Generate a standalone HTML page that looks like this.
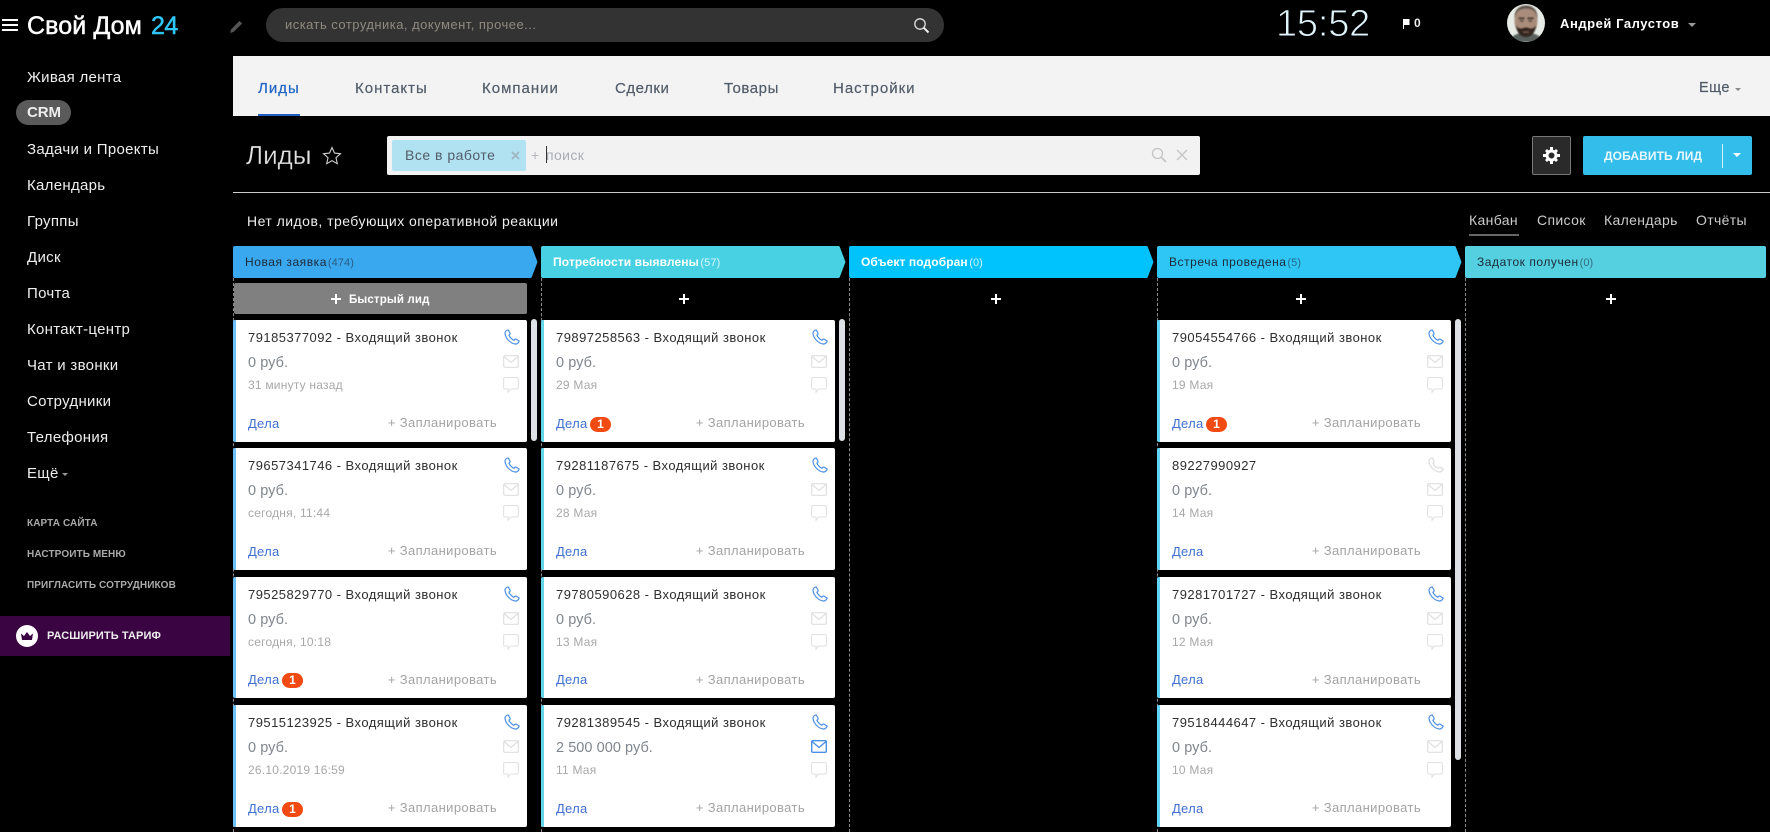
<!DOCTYPE html>
<html lang="ru">
<head>
<meta charset="utf-8">
<title>Лиды</title>
<style>
html,body{margin:0;padding:0;background:#000;width:1770px;height:832px;overflow:hidden}
body{position:relative;font-family:"Liberation Sans","DejaVu Sans",sans-serif;color:#fff}
.a{position:absolute;white-space:nowrap}
.nav{position:absolute;left:27px;font-size:15px;line-height:20px;color:#eee;letter-spacing:.3px;white-space:nowrap}
.sm{position:absolute;left:27px;font-size:10px;font-weight:bold;line-height:14px;color:#aaa;white-space:nowrap;letter-spacing:.1px}
.tab{position:absolute;top:79px;font-size:15px;line-height:20px;color:#525c69;letter-spacing:.55px;white-space:nowrap;-webkit-text-stroke:.2px currentColor}
.tab.x{letter-spacing:1px}
.vt{position:absolute;top:210px;font-size:14px;line-height:20px;color:#ccc;letter-spacing:.35px;white-space:nowrap}
.h{position:absolute;top:246px;height:32px;line-height:32px;font-size:12px;letter-spacing:.55px;white-space:nowrap;color:#1d2a38}
.h i{font-style:normal;font-size:11px;opacity:.6;letter-spacing:.1px;margin-left:-3px}
.h.w{color:#fff;font-weight:bold;letter-spacing:.1px}
.h.w i{font-weight:normal;opacity:.8;margin-left:-2px}
.c{position:absolute;width:291px;height:121.5px;background:#fff;border-left:3px solid #6cc0f5;border-radius:2px}
.c2{border-left-color:#65d6e8}
.c4{border-left-color:#63d3f9}
.c div,.c svg{position:absolute}
.t{left:12px;top:9px;line-height:18px;font-size:13px;color:#2e2e2e;letter-spacing:.46px;white-space:nowrap}
.v{left:12px;top:34px;line-height:18px;font-size:14.5px;color:#7f868e;letter-spacing:.05px;white-space:nowrap}
.d{left:12px;top:56px;line-height:18px;font-size:12px;color:#a8a8a8;letter-spacing:.22px;white-space:nowrap}
.l{left:12px;top:94.5px;line-height:18px;font-size:13px;color:#3f6fd0;letter-spacing:.25px}
.p{right:30px;top:94px;line-height:18px;font-size:13px;color:#a3a3a3;letter-spacing:.38px;white-space:nowrap}
.b{left:46px;top:96.5px;width:21px;height:15px;line-height:15px;border-radius:7.5px;background:#f24a13;color:#fff;text-align:center;font-size:12px;font-weight:bold}
.ip{left:268px;top:9px;width:16px;height:16px;fill:none;stroke:#4c90e6;stroke-width:1.2}
.ip.g{stroke:#dcdcdc}
.im{left:267px;top:35px;width:16px;height:13px;fill:none;stroke:#dfdfdf;stroke-width:1.2}
.im.on{stroke:#4c90e6;stroke-width:1.4}
.ic{left:267px;top:57px;width:16px;height:16px;fill:none;stroke:#e2e2e2;stroke-width:1.1}
.sb{position:absolute;width:6px;background:#dde1e5;border-radius:3px}
.ds{position:absolute;width:0;border-left:1px dashed #8a8a8a}
.pl{position:absolute;top:294px;width:10px;height:10px}
.pl:before,.pl:after{content:"";position:absolute;background:#fff}
.pl:before{left:4px;top:0;width:2px;height:10px}
.pl:after{left:0;top:4px;width:10px;height:2px}
</style>
</head>
<body>
<svg width="0" height="0" style="position:absolute">
<defs>
<symbol id="ph" viewBox="0 0 16 16"><path d="M3.6 1C2 1.7.8 3 1 4.6c.6 4.8 5.4 9.8 10.2 10.4 1.7.2 3-1 3.8-2.3.2-.4.1-.8-.3-1l-2.6-1.6c-.4-.2-.8-.2-1.1.1l-1.1 1.1C8 10.500 5.700 8.100 4.900 6.300l1-1.100c.3-.3.3-.7.1-1.100L4.500 1.300C4.300 1 3.900.9 3.600 1z"/></symbol>
<symbol id="ml" viewBox="0 0 16 13"><rect x=".7" y=".7" width="14.600" height="11.600" rx="1"/><path d="M1 1.500l7 6 7-6"/></symbol>
<symbol id="ch" viewBox="0 0 16 16"><path d="M2 .6h12c.8 0 1.400.6 1.400 1.400v8.600c0 .8-.6 1.400-1.400 1.400H7.500L5 15.300V12H2c-.8 0-1.400-.6-1.400-1.400V2C.6 1.200 1.200.6 2 .6z"/></symbol>
</defs>
</svg>

<!-- top bar -->
<div class="a" style="left:2px;top:19px;width:16px;height:2px;background:#fff"></div>
<div class="a" style="left:2px;top:24px;width:16px;height:2px;background:#fff"></div>
<div class="a" style="left:2px;top:29px;width:16px;height:2px;background:#fff"></div>
<div class="a" style="left:27px;top:10px;font-size:25px;line-height:32px;color:#fff;-webkit-text-stroke:.5px #fff;letter-spacing:.1px">Свой Дом <span style="color:#2fc6f6;-webkit-text-stroke:.5px #2fc6f6;margin-left:2px;letter-spacing:-.6px">24</span></div>
<svg class="a" style="left:229px;top:19px" width="16" height="15" viewBox="0 0 16 15"><path d="M1 14l1.200-3.800 8.300-8.300 2.600 2.600-8.300 8.300z" fill="#555"/></svg>
<div class="a" style="left:266px;top:8px;width:678px;height:34px;border-radius:17px;background:#333"></div>
<div class="a" style="left:285px;top:15px;font-size:13px;line-height:20px;color:#8f8a80;letter-spacing:.47px">искать сотрудника, документ, прочее...</div>
<svg class="a" style="left:913px;top:17px" width="17" height="17" viewBox="0 0 17 17"><circle cx="7" cy="7" r="5.200" fill="none" stroke="#ddd" stroke-width="1.300"/><path d="M10.700 10.700l4.800 4.800" stroke="#eee" stroke-width="2"/></svg>
<div class="a" style="left:1276px;top:2px;font-size:38px;line-height:44px;color:#dff4fb;letter-spacing:-.2px;-webkit-text-stroke:.9px #000">15:52</div>
<svg class="a" style="left:1402px;top:19px" width="8" height="10" viewBox="0 0 8 10"><path d="M1 0h6.500v6H2v4H1z" fill="#fff"/></svg>
<div class="a" style="left:1414px;top:14px;font-size:12px;line-height:18px;font-weight:bold;color:#eee">0</div>
<svg class="a" style="left:1507px;top:4px" width="38" height="38" viewBox="0 0 38 38">
<defs><clipPath id="av"><circle cx="19" cy="19" r="19"/></clipPath></defs>
<g clip-path="url(#av)">
<rect width="38" height="38" fill="#e8ece6"/>
<g style="filter:blur(.7px)">
<path d="M3 38c1-7 7-9 16-9s15 2 16 9z" fill="#59615f"/>
<ellipse cx="19" cy="17" rx="11.500" ry="15" fill="#a98c7a"/>
<path d="M7.500 15C7 6 12 1.500 19 1.500S31 6 30.500 15c-1-5-2.500-7-4-8.500C24 5 21.500 4.500 19 4.500s-5 .5-7.500 2c-1.500 1.500-3 3.500-4 8.500z" fill="#5f544c"/>
<path d="M11.500 13.500h6v1.600h-6zM20.500 13.500h6v1.600h-6z" fill="#3f322c"/>
<path d="M13 16.500h3.500v1h-3.500zM21.500 16.500h3.500v1h-3.500z" fill="#2f2521"/>
<path d="M9 21c.5 8 5 12 10 12s9.500-4 10-12c-1 2.500-2.500 3.500-5 3.500-2 0-3-1-5-1s-3 1-5 1c-2.500 0-4-1-5-3.500z" fill="#33261f"/>
<path d="M16 27.500h6v1.200h-6z" fill="#8a6a5c"/>
</g>
</g>
</svg>
<div class="a" style="left:1560px;top:15px;font-size:13px;line-height:18px;font-weight:bold;color:#fff;letter-spacing:.55px">Андрей Галустов</div>
<div class="a" style="left:1688px;top:23px;width:0;height:0;border:4px solid transparent;border-top-color:#999;border-bottom:0"></div>

<!-- sidebar -->
<div class="nav" style="top:68px">Живая лента</div>
<div class="a" style="left:16px;top:100px;width:55px;height:25px;border-radius:13px;background:#5a5a5a"></div>
<div class="nav" style="top:102.500px;font-weight:bold;letter-spacing:-.1px">CRM</div>
<div class="nav" style="top:140px">Задачи и Проекты</div>
<div class="nav" style="top:176px">Календарь</div>
<div class="nav" style="top:212px">Группы</div>
<div class="nav" style="top:248px">Диск</div>
<div class="nav" style="top:284px">Почта</div>
<div class="nav" style="top:320px">Контакт-центр</div>
<div class="nav" style="top:356px">Чат и звонки</div>
<div class="nav" style="top:392px">Сотрудники</div>
<div class="nav" style="top:428px">Телефония</div>
<div class="nav" style="top:464px">Ещё</div>
<div class="a" style="left:62px;top:473px;width:0;height:0;border:3px solid transparent;border-top-color:#999;border-bottom:0"></div>
<div class="sm" style="top:517px">КАРТА САЙТА</div>
<div class="sm" style="top:548px">НАСТРОИТЬ МЕНЮ</div>
<div class="sm" style="top:579px">ПРИГЛАСИТЬ СОТРУДНИКОВ</div>
<div class="a" style="left:0;top:616px;width:230px;height:40px;background:#3a0341"></div>
<svg class="a" style="left:16px;top:625px" width="22" height="22" viewBox="0 0 22 22"><circle cx="11" cy="11" r="11" fill="#fff"/><path d="M5 8.500l3 2.500 3-4 3 4 3-2.500-1 6.500H6z" fill="#3a0341"/></svg>
<div class="a" style="left:47px;top:628px;font-size:11px;line-height:16px;font-weight:bold;color:#eee;letter-spacing:.1px">РАСШИРИТЬ ТАРИФ</div>

<!-- tabs -->
<div class="a" style="left:233px;top:56px;width:1537px;height:60px;background:#f3f3f3"></div>
<div class="tab x" style="left:258px;color:#2064c4">Лиды</div>
<div class="a" style="left:258px;top:114px;width:42px;height:2px;background:#1f5fc4"></div>
<div class="tab x" style="left:355px">Контакты</div>
<div class="tab x" style="left:482px">Компании</div>
<div class="tab" style="left:615px">Сделки</div>
<div class="tab" style="left:724px">Товары</div>
<div class="tab x" style="left:833px">Настройки</div>
<div class="tab" style="left:1699px;font-size:14.500px;top:78px;letter-spacing:.45px">Еще</div>
<div class="a" style="left:1735px;top:88px;width:0;height:0;border:3px solid transparent;border-top-color:#888;border-bottom:0"></div>

<!-- title row -->
<div class="a" style="left:246px;top:138px;font-size:26px;line-height:34px;color:#e2e2e2;-webkit-text-stroke:.3px #000">Лиды</div>
<svg class="a" style="left:322px;top:146px" width="20" height="19" viewBox="0 0 20 19"><path d="M10 1.500l2.500 5.600 6 .6-4.500 4 1.300 6L10 14.600 4.700 17.700l1.300-6-4.500-4 6-.6z" fill="none" stroke="#ccc" stroke-width="1.100"/></svg>
<div class="a" style="left:387px;top:136px;width:813px;height:39px;background:#f2f2f2;border-radius:2px"></div>
<div class="a" style="left:392px;top:140px;width:134px;height:31px;background:#b0e2f2;border-radius:2px"></div>
<div class="a" style="left:405px;top:145px;font-size:14px;line-height:20px;color:#535c69;letter-spacing:.5px">Все в работе</div>
<svg class="a" style="left:511px;top:151px" width="9" height="9" viewBox="0 0 9 9"><path d="M1 1l7 7M8 1L1 8" stroke="#9fb4bd" stroke-width="1.600"/></svg>
<div class="a" style="left:531px;top:145px;font-size:14px;line-height:20px;color:#b5b8bc">+</div>
<div class="a" style="left:546px;top:146px;width:1px;height:17px;background:#333"></div>
<div class="a" style="left:546px;top:145px;font-size:14px;line-height:20px;color:#a8adb4;letter-spacing:.4px">поиск</div>
<svg class="a" style="left:1151px;top:147px" width="16" height="16" viewBox="0 0 16 16"><circle cx="6.500" cy="6.500" r="5" fill="none" stroke="#c4c4c4" stroke-width="1.300"/><path d="M10 10l5 5" stroke="#c4c4c4" stroke-width="1.600"/></svg>
<svg class="a" style="left:1176px;top:149px" width="12" height="12" viewBox="0 0 12 12"><path d="M1 1l10 10M11 1L1 11" stroke="#c4c4c4" stroke-width="1.300"/></svg>

<div class="a" style="left:1532px;top:136px;width:37px;height:37px;background:#2a2a2a;border:1px solid #777;border-radius:2px"></div>
<svg class="a" style="left:1543px;top:147px" width="17" height="17" viewBox="0 0 17 17"><circle cx="8.500" cy="8.500" r="4.500" fill="none" stroke="#fff" stroke-width="3"/><path d="M7 0h3v3H7zM7 14h3v3H7zM0 7h3v3H0zM14 7h3v3h-3zM2 4l2-2 2 2-2 2zM11 13l2-2 2 2-2 2zM2 13l2-2 2 2-2 2zM11 4l2-2 2 2-2 2z" fill="#fff"/></svg>
<div class="a" style="left:1583px;top:136px;width:169px;height:39px;background:#33bdeb;border-radius:2px"></div>
<div class="a" style="left:1604px;top:147px;font-size:12px;line-height:18px;font-weight:bold;color:#eaf8fd;letter-spacing:.1px">ДОБАВИТЬ ЛИД</div>
<div class="a" style="left:1722px;top:144px;width:1px;height:24px;background:#d5f1fa"></div>
<div class="a" style="left:1733px;top:153px;width:0;height:0;border:4px solid transparent;border-top-color:#fff;border-bottom:0"></div>

<div class="a" style="left:233px;top:192px;width:1537px;height:1px;background:#ccc"></div>
<div class="a" style="left:247px;top:211px;font-size:14px;line-height:20px;color:#eee;letter-spacing:.47px">Нет лидов, требующих оперативной реакции</div>
<div class="vt" style="left:1469px">Канбан</div>
<div class="a" style="left:1469px;top:234px;width:50px;height:2px;background:#666"></div>
<div class="vt" style="left:1537px">Список</div>
<div class="vt" style="left:1604px">Календарь</div>
<div class="vt" style="left:1696px">Отчёты</div>

<!-- column headers -->
<svg class="a" style="left:233px;top:246px" width="305" height="32" viewBox="0 0 305 32"><path d="M2 0H297a2 2 0 0 1 2 1.500L304.500 16 299 30.500a2 2 0 0 1-2 1.500H2a2 2 0 0 1-2-2V2a2 2 0 0 1 2-2z" fill="#39a8ef"/></svg>
<svg class="a" style="left:541px;top:246px" width="305" height="32" viewBox="0 0 305 32"><path d="M2 0H297a2 2 0 0 1 2 1.500L304.500 16 299 30.500a2 2 0 0 1-2 1.500H2a2 2 0 0 1-2-2V2a2 2 0 0 1 2-2z" fill="#47d1e2"/></svg>
<svg class="a" style="left:849px;top:246px" width="305" height="32" viewBox="0 0 305 32"><path d="M2 0H297a2 2 0 0 1 2 1.500L304.500 16 299 30.500a2 2 0 0 1-2 1.500H2a2 2 0 0 1-2-2V2a2 2 0 0 1 2-2z" fill="#00c3fe"/></svg>
<svg class="a" style="left:1157px;top:246px" width="305" height="32" viewBox="0 0 305 32"><path d="M2 0H297a2 2 0 0 1 2 1.500L304.500 16 299 30.500a2 2 0 0 1-2 1.500H2a2 2 0 0 1-2-2V2a2 2 0 0 1 2-2z" fill="#2fc6f6"/></svg>
<div class="a" style="left:1465px;top:246px;width:301px;height:32px;background:#55d0e0;border-radius:2px"></div>
<div class="h" style="left:245px">Новая заявка <i>(474)</i></div>
<div class="h w" style="left:553px">Потребности выявлены <i>(57)</i></div>
<div class="h w" style="left:861px">Объект подобран <i>(0)</i></div>
<div class="h" style="left:1169px">Встреча проведена <i>(5)</i></div>
<div class="h" style="left:1477px">Задаток получен <i>(0)</i></div>

<!-- dashed separators -->
<div class="ds" style="left:233px;top:278px;height:554px"></div>
<div class="ds" style="left:541px;top:278px;height:554px"></div>
<div class="ds" style="left:849px;top:278px;height:554px"></div>
<div class="ds" style="left:1157px;top:278px;height:554px"></div>
<div class="ds" style="left:1465px;top:278px;height:554px"></div>

<!-- quick lead / plus -->
<div class="a" style="left:234px;top:283px;width:293px;height:31px;background:#808080;border-radius:2px"></div>
<div class="pl" style="left:331px"></div>
<div class="a" style="left:349px;top:291px;font-size:11.500px;line-height:18px;font-weight:bold;color:#fff;letter-spacing:.15px">Быстрый лид</div>
<div class="pl" style="left:679px"></div>
<div class="pl" style="left:991px"></div>
<div class="pl" style="left:1296px"></div>
<div class="pl" style="left:1606px"></div>

<!-- scrollbars -->
<div class="sb" style="left:531px;top:319px;height:122px"></div>
<div class="sb" style="left:839px;top:319px;height:122px"></div>
<div class="sb" style="left:1455px;top:319px;height:441px"></div>

<!-- column 1 -->
<div class="c" style="left:233px;top:320px"><div class="t">79185377092 - Входящий звонок</div><div class="v">0 руб.</div><div class="d">31 минуту назад</div><div class="l">Дела</div><div class="p">+ Запланировать</div><svg class="ip"><use href="#ph"/></svg><svg class="im"><use href="#ml"/></svg><svg class="ic"><use href="#ch"/></svg></div>
<div class="c" style="left:233px;top:448.300px"><div class="t">79657341746 - Входящий звонок</div><div class="v">0 руб.</div><div class="d">сегодня, 11:44</div><div class="l">Дела</div><div class="p">+ Запланировать</div><svg class="ip"><use href="#ph"/></svg><svg class="im"><use href="#ml"/></svg><svg class="ic"><use href="#ch"/></svg></div>
<div class="c" style="left:233px;top:576.700px"><div class="t">79525829770 - Входящий звонок</div><div class="v">0 руб.</div><div class="d">сегодня, 10:18</div><div class="l">Дела</div><div class="b">1</div><div class="p">+ Запланировать</div><svg class="ip"><use href="#ph"/></svg><svg class="im"><use href="#ml"/></svg><svg class="ic"><use href="#ch"/></svg></div>
<div class="c" style="left:233px;top:705px"><div class="t">79515123925 - Входящий звонок</div><div class="v">0 руб.</div><div class="d">26.10.2019 16:59</div><div class="l">Дела</div><div class="b">1</div><div class="p">+ Запланировать</div><svg class="ip"><use href="#ph"/></svg><svg class="im"><use href="#ml"/></svg><svg class="ic"><use href="#ch"/></svg></div>

<!-- column 2 -->
<div class="c c2" style="left:541px;top:320px"><div class="t">79897258563 - Входящий звонок</div><div class="v">0 руб.</div><div class="d">29 Мая</div><div class="l">Дела</div><div class="b">1</div><div class="p">+ Запланировать</div><svg class="ip"><use href="#ph"/></svg><svg class="im"><use href="#ml"/></svg><svg class="ic"><use href="#ch"/></svg></div>
<div class="c c2" style="left:541px;top:448.300px"><div class="t">79281187675 - Входящий звонок</div><div class="v">0 руб.</div><div class="d">28 Мая</div><div class="l">Дела</div><div class="p">+ Запланировать</div><svg class="ip"><use href="#ph"/></svg><svg class="im"><use href="#ml"/></svg><svg class="ic"><use href="#ch"/></svg></div>
<div class="c c2" style="left:541px;top:576.700px"><div class="t">79780590628 - Входящий звонок</div><div class="v">0 руб.</div><div class="d">13 Мая</div><div class="l">Дела</div><div class="p">+ Запланировать</div><svg class="ip"><use href="#ph"/></svg><svg class="im"><use href="#ml"/></svg><svg class="ic"><use href="#ch"/></svg></div>
<div class="c c2" style="left:541px;top:705px"><div class="t">79281389545 - Входящий звонок</div><div class="v">2 500 000 руб.</div><div class="d">11 Мая</div><div class="l">Дела</div><div class="p">+ Запланировать</div><svg class="ip"><use href="#ph"/></svg><svg class="im on"><use href="#ml"/></svg><svg class="ic"><use href="#ch"/></svg></div>

<!-- column 4 -->
<div class="c c4" style="left:1157px;top:320px"><div class="t">79054554766 - Входящий звонок</div><div class="v">0 руб.</div><div class="d">19 Мая</div><div class="l">Дела</div><div class="b">1</div><div class="p">+ Запланировать</div><svg class="ip"><use href="#ph"/></svg><svg class="im"><use href="#ml"/></svg><svg class="ic"><use href="#ch"/></svg></div>
<div class="c c4" style="left:1157px;top:448.300px"><div class="t">89227990927</div><div class="v">0 руб.</div><div class="d">14 Мая</div><div class="l">Дела</div><div class="p">+ Запланировать</div><svg class="ip g"><use href="#ph"/></svg><svg class="im"><use href="#ml"/></svg><svg class="ic"><use href="#ch"/></svg></div>
<div class="c c4" style="left:1157px;top:576.700px"><div class="t">79281701727 - Входящий звонок</div><div class="v">0 руб.</div><div class="d">12 Мая</div><div class="l">Дела</div><div class="p">+ Запланировать</div><svg class="ip"><use href="#ph"/></svg><svg class="im"><use href="#ml"/></svg><svg class="ic"><use href="#ch"/></svg></div>
<div class="c c4" style="left:1157px;top:705px"><div class="t">79518444647 - Входящий звонок</div><div class="v">0 руб.</div><div class="d">10 Мая</div><div class="l">Дела</div><div class="p">+ Запланировать</div><svg class="ip"><use href="#ph"/></svg><svg class="im"><use href="#ml"/></svg><svg class="ic"><use href="#ch"/></svg></div>
</body>
</html>
